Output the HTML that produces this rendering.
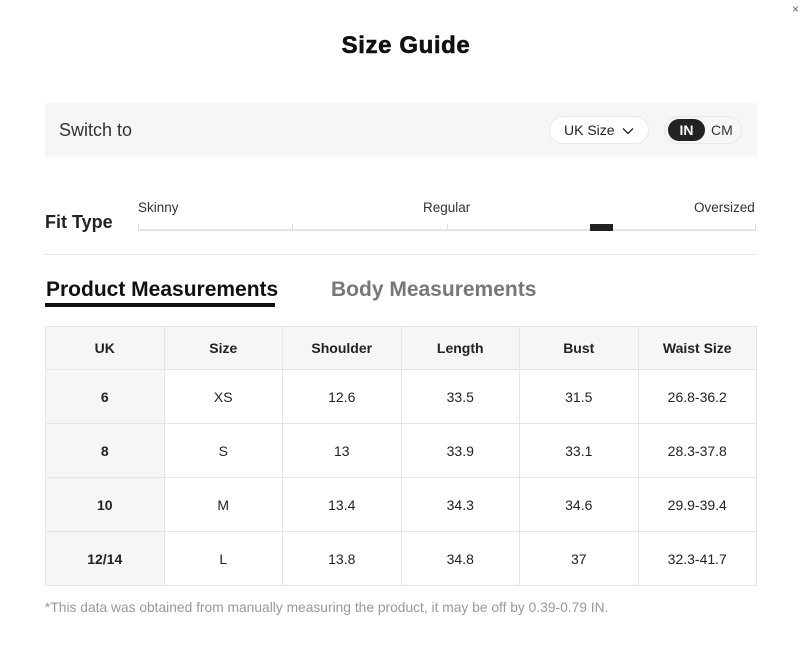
<!DOCTYPE html>
<html><head><style>
body{margin:0;width:800px;height:646px;background:#fff;font-family:"Liberation Sans",Arial,sans-serif;color:#222;position:relative;overflow:hidden}
.a{position:absolute}
table{border-collapse:collapse;position:absolute;left:45px;top:326px;width:712px;table-layout:fixed}
td{border:1px solid #e5e5e5;text-align:center;font-size:14px;height:53px;padding:0;color:#222}
tr:first-child td{height:42px;background:#f6f6f6;font-weight:bold}
td:first-child{background:#f6f6f6;font-weight:bold}
.tick{position:absolute;top:224px;width:1px;height:6px;background:#ddd}
</style></head><body>
<div class="a" style="left:0;width:812px;top:32px;text-align:center;font-size:24px;font-weight:900;letter-spacing:0.6px;color:#111;-webkit-text-stroke:0.6px #111">Size Guide</div>
<div class="a" style="right:1px;top:2px;font-size:12px;color:#666">×</div>
<div class="a" style="left:45px;top:103px;width:712px;height:54px;background:#f6f6f6"></div>
<div class="a" style="left:59px;top:120px;font-size:18px;color:#333">Switch to</div>
<div class="a" style="left:549px;top:116px;width:100px;height:28px;background:#fff;border:1px solid #e8e8e8;border-radius:15px;box-sizing:border-box;font-size:14px;line-height:26px;padding-left:14px;color:#222">UK Size <svg width="12" height="8" style="margin-left:4px" viewBox="0 0 12 8"><path d="M1 1.5l5 5 5-5" stroke="#222" stroke-width="1.3" fill="none"/></svg></div>
<div class="a" style="left:664px;top:116px;width:78px;height:28px;background:#f6f6f6;border:1px solid #e8e8e8;border-radius:15px;box-sizing:border-box"></div>
<div class="a" style="left:668px;top:119px;width:37px;height:22px;background:#222;border-radius:11px;color:#fff;font-weight:bold;font-size:14px;line-height:22px;text-align:center">IN</div>
<div class="a" style="left:711px;top:122px;font-size:14px;color:#333">CM</div>
<div class="a" style="left:45px;top:212px;font-size:18px;font-weight:bold;color:#222">Fit Type</div>
<div class="a" style="left:138px;top:200px;font-size:13.5px;color:#333">Skinny</div>
<div class="a" style="left:423px;top:200px;font-size:13.5px;color:#333">Regular</div>
<div class="a" style="left:694px;top:200px;font-size:13.5px;color:#333">Oversized</div>
<div class="a" style="left:138px;top:229px;width:618px;height:2px;background:#e5e5e5"></div>
<div class="tick" style="left:138px"></div><div class="tick" style="left:292px"></div><div class="tick" style="left:447px"></div><div class="tick" style="left:755px"></div>
<div class="a" style="left:590px;top:224px;width:23px;height:7px;background:#222"></div>
<div class="a" style="left:45px;top:254px;width:712px;height:1px;background:#e5e5e5"></div>
<div class="a" style="left:46px;top:278px;font-size:21px;font-weight:bold;color:#111">Product Measurements</div>
<div class="a" style="left:45px;top:303px;width:230px;height:4px;background:#111"></div>
<div class="a" style="left:331px;top:278px;font-size:21px;font-weight:bold;color:#777">Body Measurements</div>
<table>
<tr><td>UK</td><td>Size</td><td>Shoulder</td><td>Length</td><td>Bust</td><td>Waist Size</td></tr>
<tr><td>6</td><td>XS</td><td>12.6</td><td>33.5</td><td>31.5</td><td>26.8-36.2</td></tr>
<tr><td>8</td><td>S</td><td>13</td><td>33.9</td><td>33.1</td><td>28.3-37.8</td></tr>
<tr><td>10</td><td>M</td><td>13.4</td><td>34.3</td><td>34.6</td><td>29.9-39.4</td></tr>
<tr><td>12/14</td><td>L</td><td>13.8</td><td>34.8</td><td>37</td><td>32.3-41.7</td></tr>
</table>
<div class="a" style="left:45px;top:600px;font-size:13.8px;color:#999">*This data was obtained from manually measuring the product, it may be off by 0.39-0.79 IN.</div>
</body></html>
